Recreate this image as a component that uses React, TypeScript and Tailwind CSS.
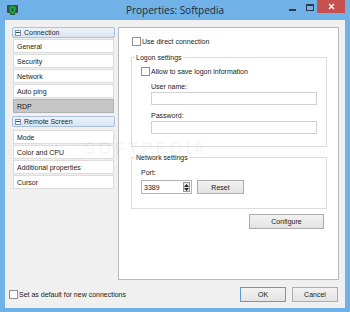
import React from "react";

function Check({ className = "" }: { className?: string }) {
  return <span className={"inline-block w-[9px] h-[9px] border border-[#8f8f8f] bg-white shrink-0 " + className} />;
}

function Header({ label }: { label: string }) {
  return (
    <div className="h-[11px] flex items-center gap-[3px] pl-[2px] rounded-[2px] border border-[#a9c1df] bg-gradient-to-b from-[#eef3f9] to-[#d9e4f2] text-[#1d2a3a]">
      <span className="w-[6px] h-[6px] border border-[#7e96b6] bg-white flex items-center justify-center">
        <span className="w-[4px] h-[1px] bg-[#3b4b63]" />
      </span>
      <span>{label}</span>
    </div>
  );
}

function Item({ label, selected = false }: { label: string; selected?: boolean }) {
  return (
    <div
      className={
        "h-[14px] mx-[1px] flex items-center pl-[3px] border " +
        (selected ? "bg-[#c6c6c6] border-[#b0b0b0]" : "bg-white border-[#dcdcdc]")
      }
    >
      {label}
    </div>
  );
}

function Btn({ label, w, def = false }: { label: string; w: string; def?: boolean }) {
  return (
    <div
      className={
        "h-[15px] flex items-center justify-center border bg-gradient-to-b from-[#f2f2f2] to-[#e3e3e3] " +
        (def ? "border-[#5f9bd0] " : "border-[#acacac] ") +
        w
      }
    >
      {label}
    </div>
  );
}

export default function App() {
  return (
    <div className="w-[350px] h-[312px] bg-[#70b1e7] flex flex-col font-['Liberation_Sans',Arial,sans-serif] text-[7px] leading-none text-[#1a1a1a] overflow-hidden relative">
      {/* title bar */}
      <div className="h-[20px] shrink-0 relative flex items-center justify-center">
        <svg className="absolute left-[7px] top-[4px]" width="11" height="11" viewBox="0 0 11 11">
          <rect x="0" y="1" width="11" height="8" rx="1" fill="#3e4a48" />
          <rect x="3" y="9" width="5" height="2" fill="#3e4a48" />
          <path d="M5.5 1.5 L9 3 L9 6 Q8.5 9 5.5 10.5 Q2.5 9 2 6 L2 3 Z" fill="#1fa64a" stroke="#0d6b2b" strokeWidth="0.6" />
          <rect x="4.6" y="4.5" width="1.8" height="2.8" fill="#0b4e1f" />
        </svg>
        <span className="text-[10px] text-[#222a33] font-['Open_Sans',Arial,sans-serif]">Properties: Softpedia</span>
        <span className="absolute left-[289px] top-[9px] w-[7px] h-[2px] bg-[#2c3a4a]" />
        <span className="absolute left-[306px] top-[4px] w-[8px] h-[7px] border border-[#2c3a4a] border-t-2" />
        <div className="absolute left-[317px] top-0 w-[28px] h-[13px] bg-[#c75050] flex items-center justify-center">
          <svg width="7" height="7" viewBox="0 0 7 7">
            <path d="M1 1 L6 6 M6 1 L1 6" stroke="white" strokeWidth="1.4" />
          </svg>
        </div>
      </div>

      {/* client area */}
      <div className="mx-[5px] mb-[4px] flex-1 bg-[#f0f0f0] flex flex-col">
        <div className="flex gap-[3px] pl-[7px] pt-[7px] h-[260px]">
          {/* left tree */}
          <div className="w-[103px] flex flex-col gap-[1px]">
            <Header label="Connection" />
            <Item label="General" />
            <Item label="Security" />
            <Item label="Network" />
            <Item label="Auto ping" />
            <Item label="RDP" selected />
            <div className="h-[1px]" />
            <Header label="Remote Screen" />
            <div className="h-[1px]" />
            <Item label="Mode" />
            <Item label="Color and CPU" />
            <Item label="Additional properties" />
            <Item label="Cursor" />
          </div>

          {/* right panel */}
          <div className="w-[221px] h-[253px] bg-white border border-[#b9b9b9] flex flex-col">
            <div className="mt-[9px] ml-[13px] flex items-center gap-[1px] h-[9px]">
              <Check />
              <span>Use direct connection</span>
            </div>

            <div className="relative mt-[11px] ml-[12px] w-[196px] h-[90px] border border-[#dcdcdc] flex flex-col">
              <span className="absolute left-[3px] top-[-5px] bg-white px-[1px] h-[9px] flex items-center">Logon settings</span>
              <div className="mt-[9px] ml-[9px] flex items-center gap-[1px] h-[9px]">
                <Check />
                <span>Allow to save logon information</span>
              </div>
              <div className="mt-[5px] ml-[19px] h-[10px] flex items-center">User name:</div>
              <div className="mt-[1px] ml-[19px] w-[166px] h-[13px] border border-[#d2d2d2] bg-white" />
              <div className="mt-[5px] ml-[19px] h-[10px] flex items-center">Password:</div>
              <div className="mt-[1px] ml-[19px] w-[166px] h-[13px] border border-[#d2d2d2] bg-white" />
            </div>

            <div className="relative mt-[10px] ml-[12px] w-[196px] h-[52px] border border-[#dcdcdc] flex flex-col">
              <span className="absolute left-[3px] top-[-5px] bg-white px-[1px] h-[9px] flex items-center">Network settings</span>
              <div className="mt-[9px] ml-[9px] h-[10px] flex items-center">Port:</div>
              <div className="mt-[3px] ml-[9px] flex gap-[5px]">
                <div className="w-[51px] h-[14px] border border-[#b4b4b4] bg-white flex items-center justify-between pl-[2px] pr-[1px]">
                  <span>3389</span>
                  <div className="w-[7px] h-[10px] border border-[#9a9a9a] bg-[#e8e8e8] flex flex-col items-center justify-around">
                    <svg width="5" height="3" viewBox="0 0 5 3"><path d="M0 3 L2.5 0 L5 3Z" fill="#222" /></svg>
                    <svg width="5" height="3" viewBox="0 0 5 3"><path d="M0 0 L2.5 3 L5 0Z" fill="#222" /></svg>
                  </div>
                </div>
                <div className="h-[14px] w-[47px] flex items-center justify-center border border-[#acacac] bg-gradient-to-b from-[#f2f2f2] to-[#e3e3e3]">Reset</div>
              </div>
            </div>

            <div className="mt-[5px] mr-[14px] flex justify-end">
              <Btn label="Configure" w="w-[75px]" />
            </div>
          </div>
        </div>

        {/* bottom row */}
        <div className="flex items-center mt-[7px] h-[15px] pl-[4px] pr-[7px]">
          <Check />
          <span className="ml-[1px]">Set as default for new connections</span>
          <div className="ml-auto flex gap-[6px]">
            <Btn label="OK" w="w-[46px]" def />
            <Btn label="Cancel" w="w-[46px]" />
          </div>
        </div>
      </div>

      <span className="absolute left-[84px] top-[140px] text-[17px] font-bold tracking-[3px] text-black/[0.04] font-['Liberation_Sans',Arial,sans-serif] pointer-events-none">SOFTPEDIA</span>
    </div>
  );
}
